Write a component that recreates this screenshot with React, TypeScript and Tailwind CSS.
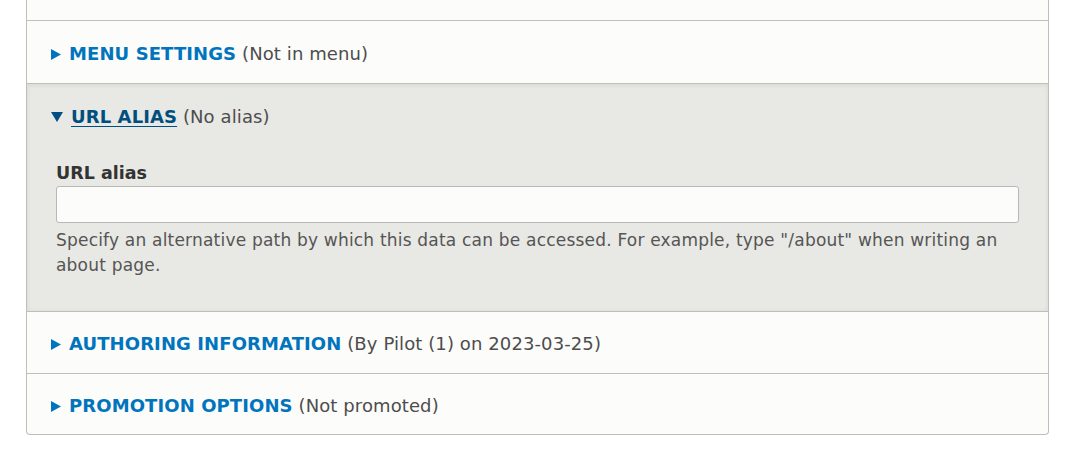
const font = { fontFamily: '"DejaVu Sans", "Lucida Grande", sans-serif' }

function Arrow({ open }: { open?: boolean }) {
  return open ? (
    <svg width="12" height="10" viewBox="0 0 12 10" className="shrink-0">
      <path d="M0 0 L12 0 L6 10 Z" fill="#004f80" />
    </svg>
  ) : (
    <svg width="10" height="11" viewBox="0 0 10 11" className="shrink-0">
      <path d="M0 0 L10 5.5 L0 11 Z" fill="#0074bd" />
    </svg>
  )
}

function Summary({ title, note, open, pad }: { title: string; note: string; open?: boolean; pad: string }) {
  return (
    <div className={'flex items-center gap-[8px] pl-[24px] leading-[26px] text-[18px] tracking-[0.1px] ' + pad}>
      <Arrow open={open} />
      <span>
        <span
          className={
            open
              ? 'font-bold uppercase text-[#004f80] underline decoration-1 underline-offset-[3px]'
              : 'font-bold uppercase text-[#0074bd]'
          }
        >
          {title}
        </span>{' '}
        <span className="text-[#4d4d4d]">{note}</span>
      </span>
    </div>
  )
}

export default function App() {
  return (
    <div className="min-h-[450px] bg-white pl-[26px] pr-[19px]" style={font}>
      <div className="border-x border-b border-[#bebfb9] rounded-b-[4px] bg-[#fcfcfa] overflow-hidden">
        <div className="h-[21px] border-b border-[#bebfb9]" />
        <div className="border-b border-[#bebfb9]">
          <Summary title="Menu settings" note="(Not in menu)" pad="pt-[20px] pb-[16px]" />
        </div>
        <div className="border-b border-[#bebfb9] bg-[#e8e8e4] shadow-[inset_0_1px_5px_rgba(0,0,0,0.08)]">
          <Summary title="URL alias" note="(No alias)" open pad="pt-[20px] pb-[17px]" />
          <div className="px-[29px] pt-[13px] pb-[33px]">
            <label className="block font-bold text-[17.5px] text-[#333] leading-[26px]">URL alias</label>
            <input
              type="text"
              className="block w-full h-[37px] bg-[#fcfcfa] border border-[#b8b8b8] rounded-[3px] outline-none"
            />
            <p className="mt-[5px] text-[17px] tracking-[0.2px] leading-[25px] text-[#555]">
              Specify an alternative path by which this data can be accessed. For example, type "/about" when writing an about page.
            </p>
          </div>
        </div>
        <div className="border-b border-[#bebfb9]">
          <Summary title="Authoring information" note="(By Pilot (1) on 2023-03-25)" pad="pt-[19px] pb-[16px]" />
        </div>
        <div>
          <Summary title="Promotion options" note="(Not promoted)" pad="pt-[19px] pb-[15px]" />
        </div>
      </div>
    </div>
  )
}
